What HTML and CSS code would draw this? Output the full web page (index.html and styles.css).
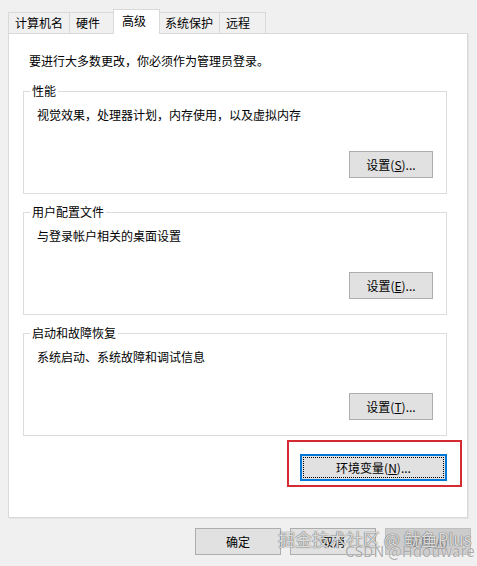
FILE: index.html
```html
<!DOCTYPE html>
<html lang="zh-CN">
<head>
    <meta charset="UTF-8">
    <title>系统属性</title>
    <link rel="stylesheet" href="styles.css">
</head>
<body>
    <div class="dialog">
        <div class="tabs">
            <div class="tab">计算机名</div>
            <div class="tab">硬件</div>
            <div class="tab active">高级</div>
            <div class="tab">系统保护</div>
            <div class="tab">远程</div>
        </div>

        <div class="panel">
            <p class="intro">要进行大多数更改，你必须作为管理员登录。</p>

            <fieldset class="group">
                <legend>性能</legend>
                <p class="desc">视觉效果，处理器计划，内存使用，以及虚拟内存</p>
                <div class="group-actions">
                    <button class="btn">设置(<u>S</u>)...</button>
                </div>
            </fieldset>

            <fieldset class="group">
                <legend>用户配置文件</legend>
                <p class="desc">与登录帐户相关的桌面设置</p>
                <div class="group-actions">
                    <button class="btn">设置(<u>E</u>)...</button>
                </div>
            </fieldset>

            <fieldset class="group">
                <legend>启动和故障恢复</legend>
                <p class="desc">系统启动、系统故障和调试信息</p>
                <div class="group-actions">
                    <button class="btn">设置(<u>T</u>)...</button>
                </div>
            </fieldset>

            <div class="env-row">
                <div class="highlight">
                    <button class="btn btn-env">环境变量(<u>N</u>)...</button>
                </div>
            </div>
        </div>

        <div class="footer">
            <button class="btn">确定</button>
            <button class="btn">取消</button>
            <button class="btn" disabled>应用(<u>A</u>)</button>
        </div>

        <div class="watermark">
            <span class="wm-main">掘金技术社区 @ 鱿鱼Plus</span>
            <span class="wm-sub">CSDN @Hdouware</span>
        </div>
    </div>
</body>
</html>
```

FILE: styles.css
```css
body {
    margin: 0;
    background-color: #f0f0f0;
    font-family: "Noto Sans CJK SC", "Noto Sans", sans-serif;
    font-size: 12px;
    color: #000;
}
.dialog {
    position: relative;
    width: 477px;
    height: 566px;
}
.tabs {
    display: flex;
    align-items: flex-end;
    padding: 9px 0 0 8px;
    height: 24px;
}
.tab {
    box-sizing: border-box;
    height: 21px;
    min-width: 47px;
    padding: 0 6px;
    margin-right: -1px;
    border: 1px solid #d9d9d9;
    border-bottom: none;
    background: #f0f0f0;
    line-height: 20px;
}
.tab.active {
    position: relative;
    z-index: 1;
    height: 25px;
    margin: 0 -2px -1px -2px;
    padding: 0 8px;
    background: #fff;
    line-height: 22px;
}
.panel {
    box-sizing: border-box;
    height: 485px;
    margin: 0 9px 0 8px;
    padding: 19px 0 0 0;
    background: #fff;
    border: 1px solid #d9d9d9;
    box-shadow: 1px 1px 0 #e4e4e4;
}
.intro {
    margin: 0;
    padding-left: 20px;
    line-height: 16px;
}
.group {
    margin: 14px 20px 0 14px;
    padding: 0 13px 15px 12px;
    border: 1px solid #dcdcdc;
    min-width: 0;
}
.group + .group {
    margin-top: 10px;
}
.group legend {
    padding: 0 2px;
    margin-left: -6px;
    line-height: 16px;
}
.desc {
    margin: 8px 0 0 1px;
    line-height: 16px;
}
.group-actions {
    display: flex;
    justify-content: flex-end;
    margin-top: 28px;
}
.btn {
    box-sizing: border-box;
    width: 84px;
    height: 27px;
    padding: 0;
    background: #e1e1e1;
    border: 1px solid #adadad;
    font-family: inherit;
    font-size: 12px;
    color: #000;
}
.btn u {
    text-underline-offset: 1px;
}
.env-row {
    display: flex;
    justify-content: flex-end;
    margin: 4px 5px 0 0;
}
.highlight {
    padding: 12px 13px 4px 11px;
    border: 2px solid #d52a32;
}
.btn-env {
    width: 147px;
    border-color: #0078d7;
    box-shadow: inset 0 0 0 1px #0078d7;
    outline: 1px dotted #000;
    outline-offset: -4px;
}
.footer {
    display: flex;
    gap: 9px;
    padding: 10px 0 0 195px;
}
.footer .btn {
    width: 86px;
}
.btn:disabled {
    background: #cccccc;
    border-color: #bfbfbf;
    color: #838383;
}
/* watermark stamped over the screenshot */
.watermark {
    position: absolute;
    left: 278px;
    top: 528px;
    width: 199px;
    height: 38px;
    pointer-events: none;
}
.wm-main {
    position: absolute;
    left: 0;
    top: 0;
    font-size: 17px;
    line-height: 22px;
    color: rgba(250, 250, 250, 0.8);
    text-shadow: 0 0 1px #666, 0 0 1px #666;
    white-space: nowrap;
}
.wm-sub {
    position: absolute;
    left: 67px;
    top: 13px;
    font-size: 15px;
    line-height: 20px;
    color: rgba(150, 150, 150, 0.8);
    text-shadow: 0 0 1px #fff;
    white-space: nowrap;
}
```
